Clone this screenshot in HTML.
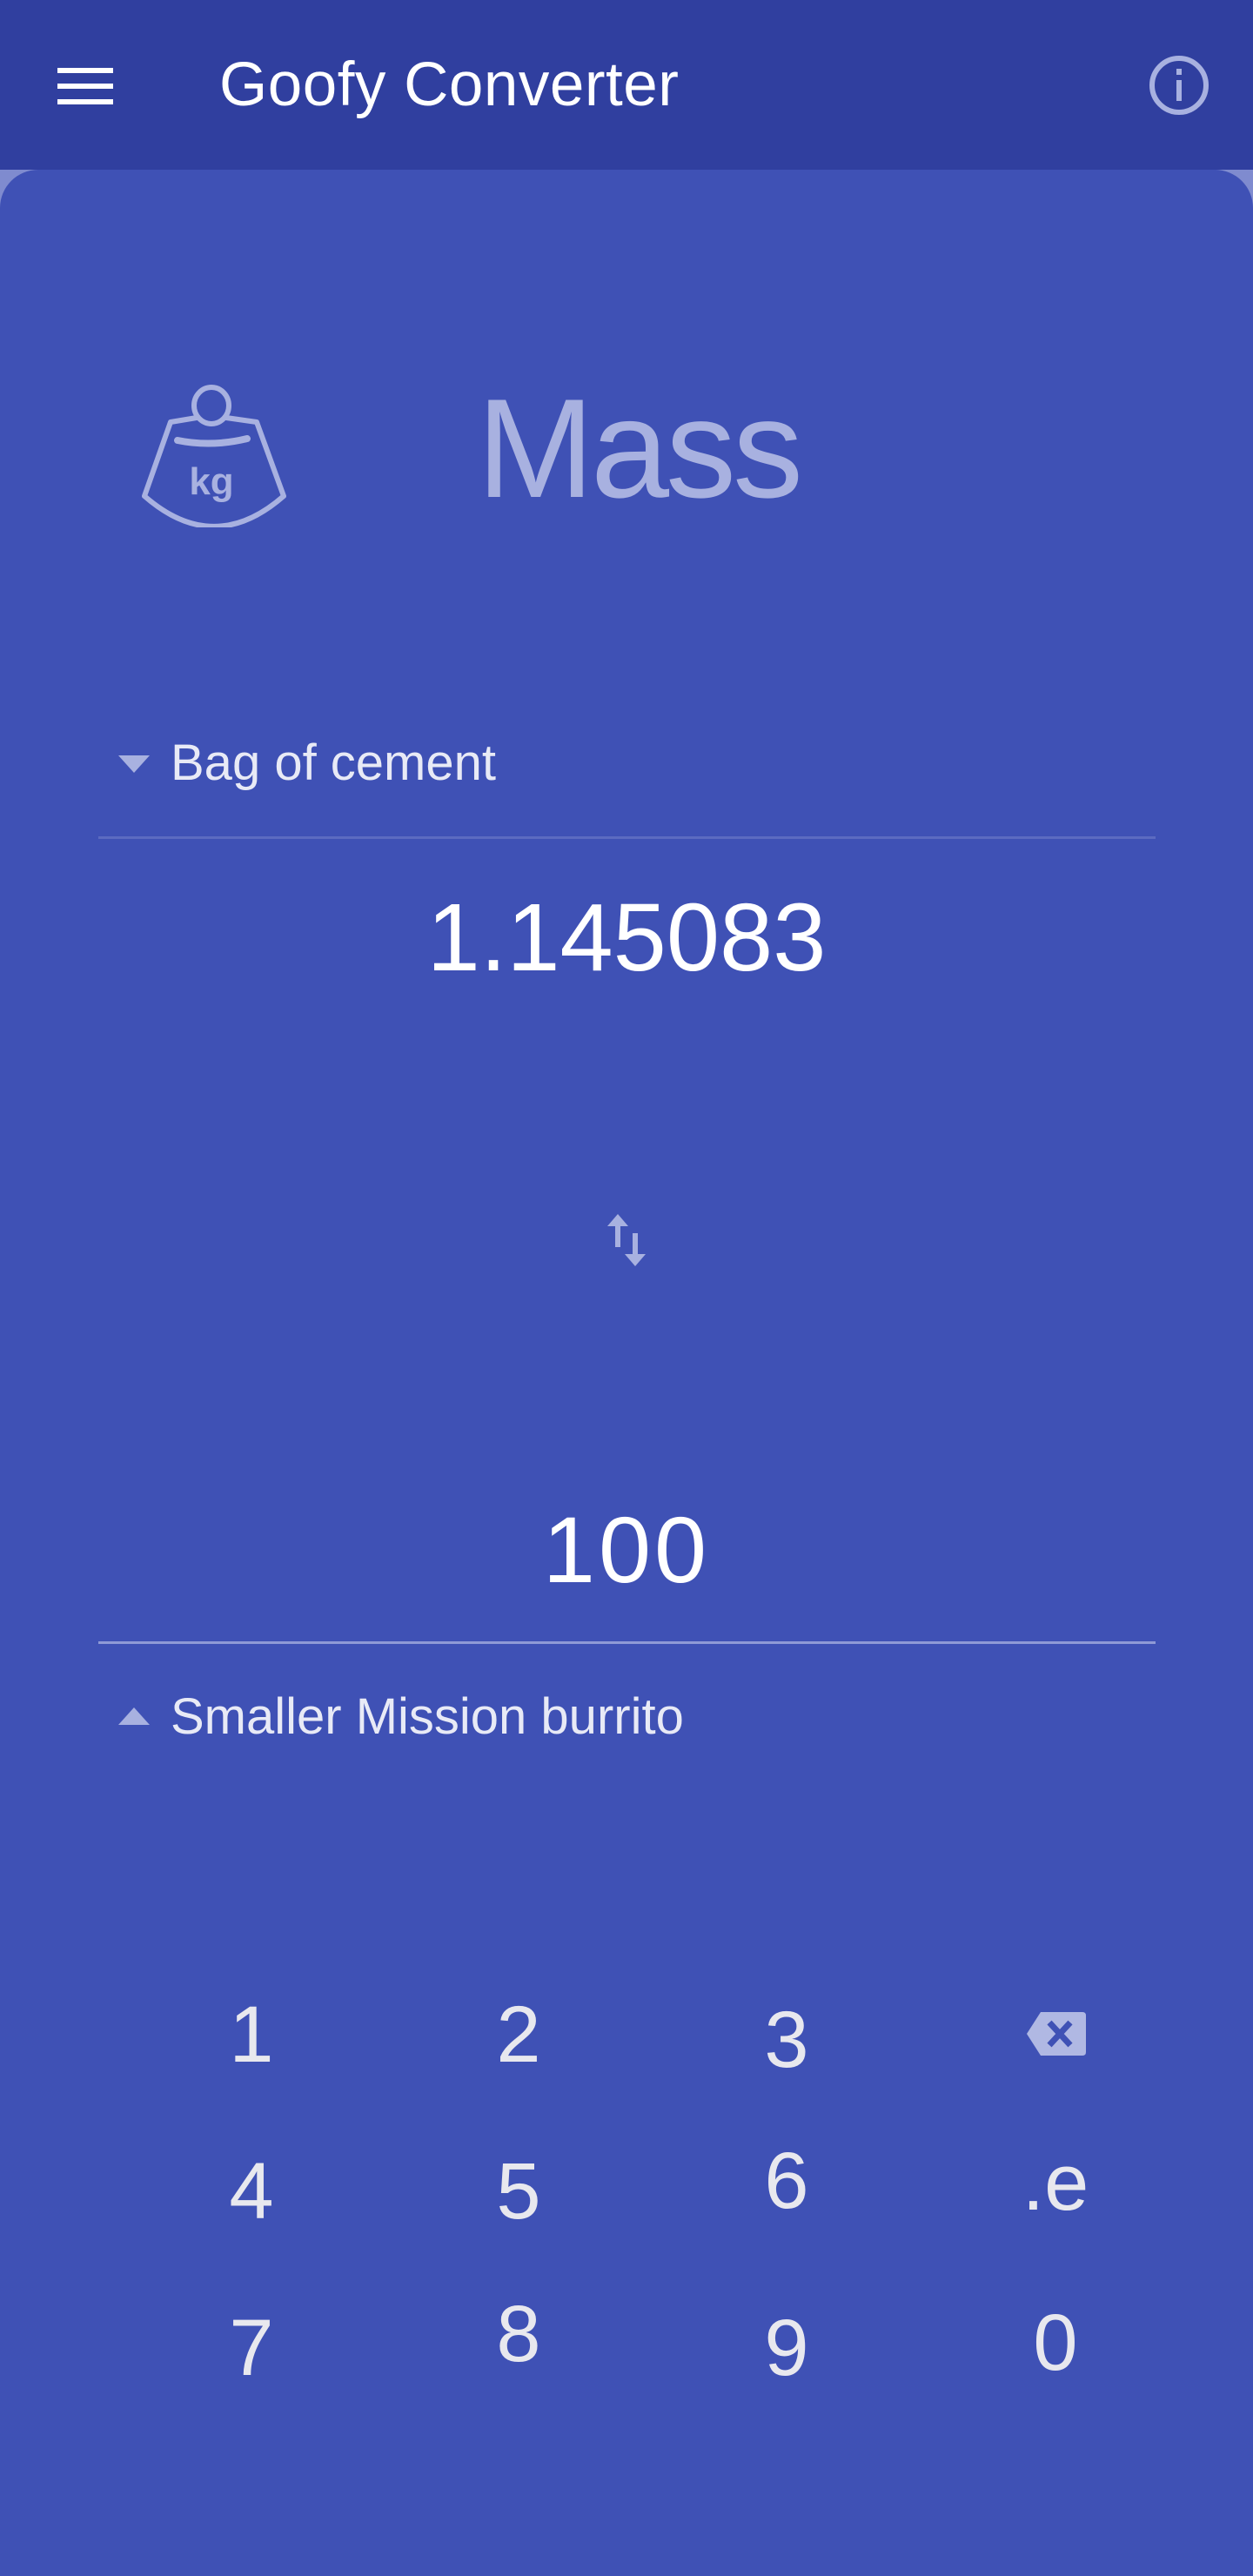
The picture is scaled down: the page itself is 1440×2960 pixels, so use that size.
<!DOCTYPE html>
<html><head><meta charset="utf-8"><style>
html,body{margin:0;padding:0}
body{width:1440px;height:2960px;background:#3f51b5;position:relative;overflow:hidden;font-family:"Liberation Sans",sans-serif}
.hdr{position:absolute;left:0;top:0;width:1440px;height:195px;background:#303f9f}
.under{position:absolute;left:0;top:195px;width:1440px;height:60px;background:#7f8bcf}
.card{position:absolute;left:0;top:195px;width:1440px;height:2765px;background:#3f51b5;border-radius:44px 44px 0 0}
.abs{position:absolute;white-space:nowrap}
.key{position:absolute;width:200px;text-align:center;font-size:92px;color:#e8e8ee;font-weight:300;line-height:1}
</style></head><body>
<div class="hdr"></div>
<div class="under"></div>
<div class="card"></div>
<svg class="abs" style="left:66px;top:78px" width="64" height="42"><rect x="0" y="0" width="64" height="6" fill="#fff"/><rect x="0" y="18" width="64" height="6" fill="#fff"/><rect x="0" y="36" width="64" height="6" fill="#fff"/></svg>
<div class="abs" style="left:252px;top:58px;font-size:71px;color:#fff;line-height:80px;letter-spacing:0.5px">Goofy Converter</div>
<svg class="abs" style="left:1319px;top:62px" width="72" height="72"><circle cx="36" cy="36" r="31" fill="none" stroke="#a8b1e0" stroke-width="6"/><rect x="33" y="30" width="6" height="24" fill="#a8b1e0"/><rect x="33" y="17" width="6" height="7" fill="#a8b1e0"/></svg>
<svg class="abs" style="left:160px;top:440px" width="172" height="166" viewBox="0 0 172 166">
<g fill="none" stroke="#a8b1e0" stroke-width="6" stroke-linecap="round" stroke-linejoin="round">
<ellipse cx="83" cy="26" rx="20" ry="21"/>
<path d="M66 40 L36 45 L6 130 Q86 200 166 130 L135 45 L100 40"/>
<path d="M44 66 Q83 74 124 64" stroke-width="8"/>
</g>
<text x="83" y="128" text-anchor="middle" font-family="Liberation Sans" font-weight="bold" font-size="44" fill="#a8b1e0">kg</text>
</svg>
<div class="abs" style="left:548px;top:426px;font-size:162px;color:#a8b1e0;line-height:180px;font-weight:300;letter-spacing:-4px">Mass</div>
<svg class="abs" style="left:136px;top:868px" width="36" height="20"><polygon points="0,0 36,0 18,20" fill="#a8b1e0"/></svg>
<div class="abs" style="left:196px;top:844px;font-size:58px;color:#e8eaf6;line-height:66px">Bag of cement</div>
<div class="abs" style="left:113px;top:961px;width:1215px;height:3px;background:#5c6bc0"></div>
<div class="abs" style="left:0;top:1008px;width:1440px;text-align:center;font-size:110px;color:#fff;line-height:140px">1.145083</div>
<svg class="abs" style="left:694px;top:1393px" width="52" height="64"><polygon points="4,16 16,2 28,16" fill="#a8b1e0"/><rect x="13" y="14" width="6" height="26" fill="#a8b1e0"/><polygon points="24,48 36,62 48,48" fill="#a8b1e0"/><rect x="33" y="24" width="6" height="26" fill="#a8b1e0"/></svg>
<div class="abs" style="left:0;top:1716px;width:1440px;text-align:center;font-size:108px;color:#fff;line-height:130px;letter-spacing:4px">100</div>
<div class="abs" style="left:113px;top:1886px;width:1215px;height:3px;background:#8f9ad6"></div>
<svg class="abs" style="left:136px;top:1962px" width="36" height="20"><polygon points="0,20 36,20 18,0" fill="#a8b1e0"/></svg>
<div class="abs" style="left:196px;top:1940px;font-size:58px;color:#e8eaf6;line-height:66px">Smaller Mission burrito</div>
<div class="key" style="left:189px;top:2292px">1</div>
<div class="key" style="left:496px;top:2292px">2</div>
<div class="key" style="left:804px;top:2298px">3</div>
<svg class="abs" style="left:1178px;top:2310px" width="72" height="54"><path d="M18 2 H66 Q70 2 70 6 V48 Q70 52 66 52 H18 L2 27 Z" fill="#b0b8e3"/><path d="M28 14 L52 40 M52 14 L28 40" stroke="#3f51b5" stroke-width="7"/></svg>
<div class="key" style="left:189px;top:2472px">4</div>
<div class="key" style="left:496px;top:2472px">5</div>
<div class="key" style="left:804px;top:2460px">6</div>
<div class="key" style="left:1113px;top:2462px">.e</div>
<div class="key" style="left:189px;top:2652px">7</div>
<div class="key" style="left:496px;top:2636px">8</div>
<div class="key" style="left:804px;top:2652px">9</div>
<div class="key" style="left:1113px;top:2646px">0</div>
</body></html>
